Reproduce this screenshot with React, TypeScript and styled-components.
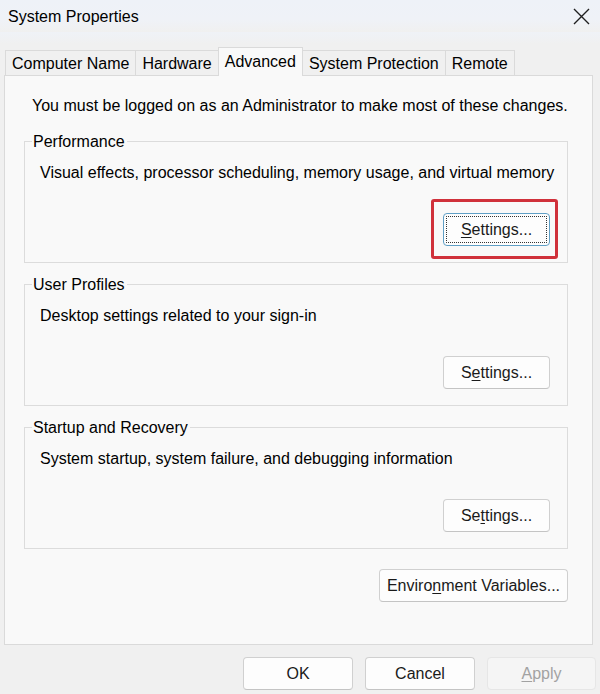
import React from "react";
import styled, { createGlobalStyle, css } from "styled-components";

const GlobalStyle = createGlobalStyle`
  html, body {
    margin: 0;
    padding: 0;
    background: #f0f0f0;
  }
  body {
    font-family: "Liberation Sans", Arial, sans-serif;
    font-size: 16px;
    color: #000;
  }
`;

const Window = styled.div`
  width: 600px;
  height: 694px;
  display: flex;
  flex-direction: column;
  background: #f0f0f0;
  overflow: hidden;
`;

const TitleBar = styled.div`
  height: 32px;
  display: flex;
  align-items: center;
  justify-content: space-between;
  padding: 0 10px 0 8px;
  background: linear-gradient(#eef2f8, #eff2f7 60%, #f0f0f0);
`;

const Title = styled.span`
  line-height: 19px;
`;

const CloseButton = styled.span`
  display: flex;
  width: 18px;
  height: 18px;
  align-items: center;
  justify-content: center;
`;

const Body = styled.div`
  display: flex;
  flex-direction: column;
  padding: 15px 7px 0 4px;
  background: linear-gradient(#eff2f7, #f0f0f0 12px);
`;

const TabStrip = styled.div`
  display: flex;
  align-items: flex-end;
  height: 28px;
  padding-left: 1px;
`;

const Tab = styled.div<{ $active?: boolean; $last?: boolean }>`
  height: 25px;
  box-sizing: border-box;
  padding: 0 6px;
  line-height: 25px;
  border: 1px solid #dadada;
  border-bottom: none;
  border-right: ${(p) => (p.$last ? "1px solid #dadada" : "none")};
  background: #f0f0f0;
  white-space: nowrap;

  ${(p) =>
    p.$active &&
    css`
      position: relative;
      z-index: 1;
      height: 29px;
      line-height: 27px;
      margin-bottom: -1px;
      background: #f9f9f9;
      border-right: 1px solid #dadada;
      & + div {
        border-left: none;
      }
    `}
`;

const Panel = styled.div`
  height: 570px;
  box-sizing: border-box;
  border: 1px solid #dadada;
  background: #f9f9f9;
  padding: 20px 24px 0 19px;
  display: flex;
  flex-direction: column;
`;

const Intro = styled.p`
  margin: 0 0 17px 8px;
  line-height: 19px;
  white-space: nowrap;
`;

const Groups = styled.div`
  display: flex;
  flex-direction: column;
  gap: 12px;
`;

const Group = styled.fieldset`
  margin: 0;
  padding: 12px 17px 16px 15px;
  border: 1px solid #dcdcdc;
  display: flex;
  flex-direction: column;
  min-width: 0;
`;

const Legend = styled.legend`
  margin-left: -8px;
  padding: 0 2px 0 1px;
  line-height: 19px;
`;

const Description = styled.div`
  line-height: 19px;
  white-space: nowrap;
`;

const ButtonRow = styled.div<{ $top?: number }>`
  display: flex;
  justify-content: flex-end;
  gap: 12px;
  margin-top: ${(p) => p.$top ?? 0}px;
`;

const Button = styled.button<{ $width: number; $focused?: boolean; $marked?: boolean }>`
  position: relative;
  width: ${(p) => p.$width}px;
  height: 33px;
  box-sizing: border-box;
  border: 1px solid #d0d0d0;
  border-bottom-color: #c4c4c4;
  border-radius: 4px;
  background: #fdfdfd;
  font: inherit;
  color: #1a1a1a;
  padding: 0;
  line-height: 19px;
  white-space: nowrap;
  cursor: default;

  &:disabled {
    background: #f5f5f5;
    border-color: #e6e6e6;
    color: #a2a2a2;
  }

  ${(p) =>
    p.$focused &&
    css`
      border-color: #5f9fc6;
      &::before {
        content: "";
        position: absolute;
        inset: 2px;
        border: 1px dotted #333;
        border-radius: 1px;
      }
    `}

  ${(p) =>
    p.$marked &&
    css`
      &::after {
        content: "";
        position: absolute;
        top: -15px;
        bottom: -14px;
        left: -13px;
        right: -9px;
        border: 3px solid #d0313b;
        border-radius: 3px;
      }
    `}
`;

const Key = styled.span`
  text-decoration: underline;
  text-underline-offset: 2px;
`;

const Footer = styled.div`
  display: flex;
  justify-content: flex-end;
  gap: 12px;
  padding: 12px 4px 0 0;
`;

const App = () => {
  return (
    <>
      <GlobalStyle />
      <Window>
        <TitleBar>
          <Title>System Properties</Title>
          <CloseButton>
            <svg width="17" height="17" viewBox="0 0 17 17">
              <path d="M1 1 L16 16 M16 1 L1 16" stroke="#1f1f1f" strokeWidth="1.4" fill="none" />
            </svg>
          </CloseButton>
        </TitleBar>
        <Body>
          <TabStrip>
            <Tab>Computer Name</Tab>
            <Tab>Hardware</Tab>
            <Tab $active>Advanced</Tab>
            <Tab>System Protection</Tab>
            <Tab $last>Remote</Tab>
          </TabStrip>
          <Panel>
            <Intro>You must be logged on as an Administrator to make most of these changes.</Intro>
            <Groups>
              <Group>
                <Legend>Performance</Legend>
                <Description>Visual effects, processor scheduling, memory usage, and virtual memory</Description>
                <ButtonRow $top={31}>
                  <Button $width={107} $focused $marked>
                    <Key>S</Key>ettings...
                  </Button>
                </ButtonRow>
              </Group>
              <Group>
                <Legend>User Profiles</Legend>
                <Description>Desktop settings related to your sign-in</Description>
                <ButtonRow $top={31}>
                  <Button $width={107}>
                    S<Key>e</Key>ttings...
                  </Button>
                </ButtonRow>
              </Group>
              <Group>
                <Legend>Startup and Recovery</Legend>
                <Description>System startup, system failure, and debugging information</Description>
                <ButtonRow $top={31}>
                  <Button $width={107}>
                    Se<Key>t</Key>tings...
                  </Button>
                </ButtonRow>
              </Group>
            </Groups>
            <ButtonRow $top={20}>
              <Button $width={189}>
                Enviro<Key>n</Key>ment Variables...
              </Button>
            </ButtonRow>
          </Panel>
        </Body>
        <Footer>
          <Button $width={110}>OK</Button>
          <Button $width={110}>Cancel</Button>
          <Button $width={109} disabled>
            <Key>A</Key>pply
          </Button>
        </Footer>
      </Window>
    </>
  );
};

export default App;
